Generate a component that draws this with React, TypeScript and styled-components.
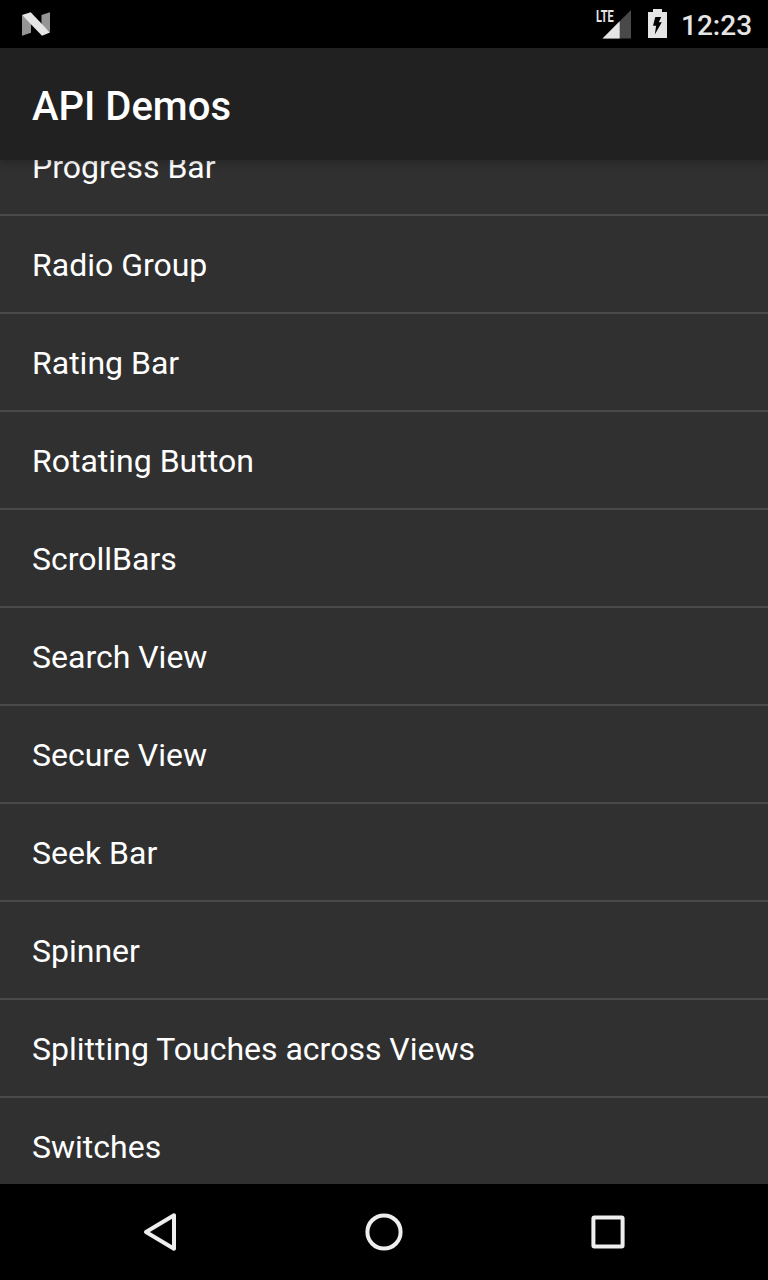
import React from 'react';
import styled, { createGlobalStyle } from 'styled-components';

const GlobalStyle = createGlobalStyle`
  body {
    margin: 0;
    background: #000;
    font-family: Roboto, sans-serif;
    overflow: hidden;
  }
`;

const Screen = styled.div`
  display: flex;
  flex-direction: column;
  width: 768px;
  height: 1280px;
  overflow: hidden;
  background: #000;
`;

const StatusBar = styled.header`
  display: flex;
  flex: none;
  align-items: center;
  justify-content: space-between;
  height: 48px;
  padding: 0 16px 0 22px;
  box-sizing: border-box;
`;

const StatusIcons = styled.div`
  display: flex;
  align-items: center;
`;

const Icon = styled.svg`
  display: block;
  flex: none;
`;

const BatterySlot = styled.div`
  margin-left: 17px;
`;

const Clock = styled.time`
  margin-left: 14px;
  padding-top: 3px;
  width: 71px;
  color: #e5e5e5;
  font-size: 28px;
  font-weight: 500;
  line-height: 33px;
  white-space: nowrap;
`;

const ActionBar = styled.div`
  display: flex;
  flex: none;
  align-items: center;
  position: relative;
  z-index: 1;
  height: 112px;
  padding: 6px 32px 0;
  box-sizing: border-box;
  background: #212121;
  box-shadow: 0 2px 8px rgba(0, 0, 0, 0.25);
`;

const Title = styled.h1`
  margin: 0;
  color: #fff;
  font-size: 40px;
  font-weight: 500;
  line-height: 48px;
`;

const ListViewport = styled.main`
  flex: 1;
  min-height: 0;
  overflow: hidden;
  background: #303030;
`;

const List = styled.ul`
  margin: -42px 0 0;
  padding: 0;
  list-style: none;
`;

const Row = styled.li`
  display: flex;
  align-items: center;
  height: 98px;
  padding: 2px 32px 0;
  box-sizing: border-box;
  border-bottom: 2px solid #494949;
  color: #fff;
  font-size: 32px;
  line-height: 38px;
`;

const NavBar = styled.nav`
  display: flex;
  flex: none;
  align-items: center;
  justify-content: center;
  height: 96px;
  gap: 164px;
`;

const NavButton = styled.button`
  width: 60px;
  height: 60px;
  padding: 0;
  border: 0;
  background: none;
`;

const items = [
  'Progress Bar',
  'Radio Group',
  'Rating Bar',
  'Rotating Button',
  'ScrollBars',
  'Search View',
  'Secure View',
  'Seek Bar',
  'Spinner',
  'Splitting Touches across Views',
  'Switches',
];

const NougatIcon = () => (
  <Icon width="28" height="24" viewBox="0 0 28 24">
    <path d="M0 3L9 11V20.7L0 23.7ZM19.5 3L28 0.3V20L19.5 13Z" fill="#959595" />
    <path d="M0 3L8.7 0.3L28 20.5L20 23.7Z" fill="#e5e5e5" />
  </Icon>
);

const SignalIcon = () => (
  <Icon width="36" height="48" viewBox="0 0 36 48">
    <path d="M36.3 9.7V38.5H7.5Z" fill="#494949" />
    <path d="M24.7 21.3V38.5H7.5Z" fill="#e5e5e5" />
    <text
      x="1"
      y="22.4"
      fill="#e5e5e5"
      fontFamily="Roboto, sans-serif"
      fontSize="17"
      fontWeight="700"
      textLength="17.8"
      lengthAdjust="spacingAndGlyphs"
    >
      LTE
    </text>
  </Icon>
);

const BatteryIcon = () => (
  <Icon width="19" height="48" viewBox="0 0 19 48">
    <path d="M5 9H14V12H19V38H0V12H5Z" fill="#e5e5e5" />
    <path d="M7.3 17H13.2L10.8 22.3H13.8L6.8 34.5L8.1 25.7H5Z" fill="#000" />
  </Icon>
);

export default function App() {
  return (
    <>
      <GlobalStyle />
      <Screen>
        <StatusBar>
          <NougatIcon />
          <StatusIcons>
            <SignalIcon />
            <BatterySlot>
              <BatteryIcon />
            </BatterySlot>
            <Clock>12:23</Clock>
          </StatusIcons>
        </StatusBar>
        <ActionBar>
          <Title>API Demos</Title>
        </ActionBar>
        <ListViewport>
          <List>
            {items.map((item) => (
              <Row key={item}>{item}</Row>
            ))}
          </List>
        </ListViewport>
        <NavBar>
          <NavButton aria-label="Back">
            <Icon width="60" height="60" viewBox="0 0 60 60">
              <path d="M44 13.3V46.7L16 30Z" fill="none" stroke="#eee" strokeWidth="4" strokeLinejoin="round" />
            </Icon>
          </NavButton>
          <NavButton aria-label="Home">
            <Icon width="60" height="60" viewBox="0 0 60 60">
              <circle cx="30" cy="30" r="16.6" fill="none" stroke="#eee" strokeWidth="4" />
            </Icon>
          </NavButton>
          <NavButton aria-label="Overview">
            <Icon width="60" height="60" viewBox="0 0 60 60">
              <rect x="15.4" y="15.4" width="29.2" height="29.2" rx="1" fill="none" stroke="#eee" strokeWidth="4" />
            </Icon>
          </NavButton>
        </NavBar>
      </Screen>
    </>
  );
}
